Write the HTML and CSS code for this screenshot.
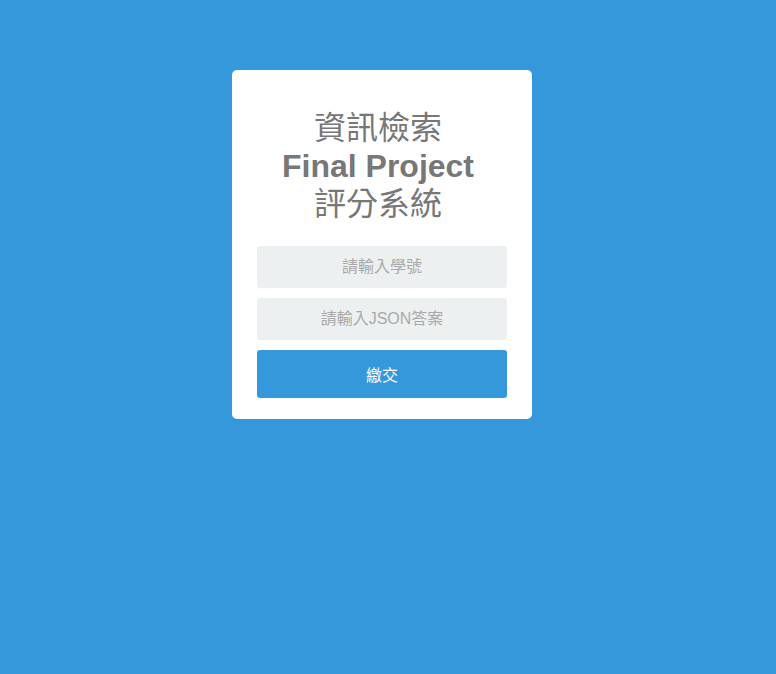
FILE: index.html
```html
<!DOCTYPE html>
<html lang="zh-Hant">
<head>
<meta charset="utf-8">
<title>資訊檢索 Final Project 評分系統</title>
<link rel="stylesheet" href="styles.css">
</head>
<body>
<div class="page">
  <form class="card">
    <h1 class="title"><span class="cjk">資訊檢索</span><br>Final Project<br><span class="cjk">評分系統</span></h1>
    <input class="field" type="text" placeholder="請輸入學號">
    <input class="field" type="text" placeholder="請輸入JSON答案">
    <button class="submit" type="button">繳交</button>
  </form>
</div>
</body>
</html>
```
FILE: styles.css
```css
html, body {
  margin: 0;
  padding: 0;
  background: #3498db;
  height: 100%;
}
body {
  font-family: "Liberation Sans", "Noto Sans CJK TC", sans-serif;
}
.page {
  padding-top: 70px;
  padding-left: 232px;
}
.card {
  box-sizing: border-box;
  width: 300px;
  height: 349px;
  background: #fff;
  border-radius: 5px;
  padding: 39px 25px 21px;
  display: flex;
  flex-direction: column;
  gap: 10px;
}
.title {
  margin: 0 8px 13px 0;
  font-size: 32px;
  line-height: 38px;
  font-weight: bold;
  color: #777;
  text-align: center;
}
.cjk {
  font-weight: normal;
}
.field {
  box-sizing: border-box;
  width: 250px;
  height: 42px;
  border: none;
  border-radius: 3px;
  background: #ecf0f1;
  font-family: "Liberation Sans", "Noto Sans CJK TC", sans-serif;
  font-size: 16px;
  text-align: center;
  color: #555;
  outline: none;
  padding: 0 10px;
  margin: 0;
}
.field::placeholder {
  color: #aaa;
}
.submit {
  box-sizing: border-box;
  width: 250px;
  height: 48px;
  border: none;
  border-radius: 3px;
  background: #3498db;
  color: #fff;
  font-family: "Liberation Sans", "Noto Sans CJK TC", sans-serif;
  font-size: 16px;
  margin: 0;
  padding: 0;
  cursor: pointer;
}
```
